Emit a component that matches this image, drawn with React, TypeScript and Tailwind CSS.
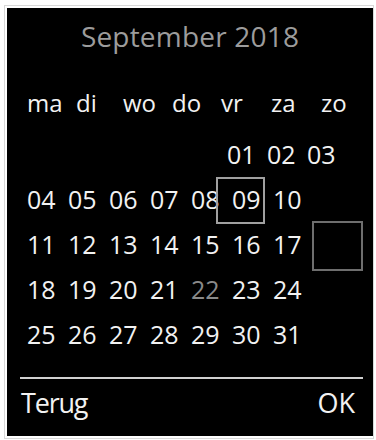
import React from "react";

const font = { fontFamily: '"Open Sans", "Liberation Sans", sans-serif' };

const rows: { n: string; dim?: boolean }[][] = [
  [{ n: "04" }, { n: "05" }, { n: "06" }, { n: "07" }, { n: "08" }, { n: "09" }, { n: "10" }],
  [{ n: "11" }, { n: "12" }, { n: "13" }, { n: "14" }, { n: "15" }, { n: "16" }, { n: "17" }],
  [{ n: "18" }, { n: "19" }, { n: "20" }, { n: "21" }, { n: "22", dim: true }, { n: "23" }, { n: "24" }],
  [{ n: "25" }, { n: "26" }, { n: "27" }, { n: "28" }, { n: "29" }, { n: "30" }, { n: "31" }],
];

export default function App() {
  return (
    <div className="w-[376px] h-[440px] bg-white pt-[5px] pl-[4px]" style={font}>
      <div className="w-[370px] border border-[#d8d8d8] p-[2px]">
        <div className="relative w-[366px] h-[428px] bg-black text-[#f2f2f2] flex flex-col">
          <div className="pt-[10px] h-[46px] text-center text-[28px] leading-[36px] text-[#9c9c9c] tracking-[0.2px]">
            September 2018
          </div>
          <div className="mt-[34px] h-[30px] flex text-[24px] leading-[30px] pl-[20px]">
            <span className="w-[49px]">ma</span>
            <span className="w-[47px]">di</span>
            <span className="w-[49px]">wo</span>
            <span className="w-[49px]">do</span>
            <span className="w-[50px]">vr</span>
            <span className="w-[50px]">za</span>
            <span className="w-[40px]">zo</span>
          </div>
          <div className="mt-[14px] flex flex-col text-[25px] leading-[45px]">
            <div className="flex h-[45px] pl-[220px]">
              <span className="w-[40px]">01</span>
              <span className="w-[40px]">02</span>
              <span className="w-[40px]">03</span>
            </div>
            {rows.map((r, i) => (
              <div key={i} className="flex h-[45px] pl-[20px]">
                {r.map((c) => (
                  <span key={c.n} className={c.dim ? "w-[41px] text-[#8a8a8a]" : "w-[41px]"}>
                    {c.n}
                  </span>
                ))}
              </div>
            ))}
          </div>
          <div className="mt-[20px] ml-[13px] mr-[10px] h-[2px] bg-[#d0d0d0]" />
          <div className="mt-[6px] flex justify-between pl-[14px] pr-[18px] text-[27px] leading-[36px]">
            <span className="tracking-[-1.2px]">Terug</span>
            <span>OK</span>
          </div>
          <div className="absolute left-[209px] top-[169px] w-[49px] h-[47px] border-2 border-[#a0a0a0]" />
          <div className="absolute left-[305px] top-[213px] w-[51px] h-[50px] border-2 border-[#6e6e6e]" />
        </div>
      </div>
    </div>
  );
}
